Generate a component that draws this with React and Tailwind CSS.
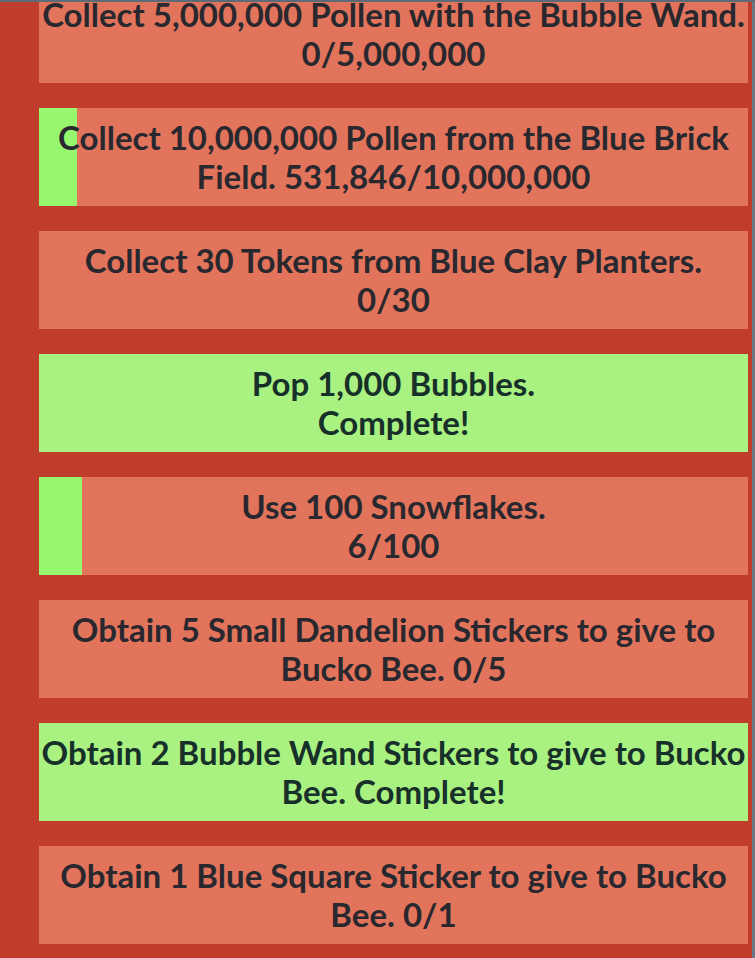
import React from "react";

const quests = [
  { lines: ["Collect 5,000,000 Pollen with the Bubble Wand.", "0/5,000,000"], done: false, progress: 0 },
  { lines: ["Collect 10,000,000 Pollen from the Blue Brick", "Field. 531,846/10,000,000"], done: false, progress: 531846 / 10000000 },
  { lines: ["Collect 30 Tokens from Blue Clay Planters.", "0/30"], done: false, progress: 0 },
  { lines: ["Pop 1,000 Bubbles.", "Complete!"], done: true, progress: 1 },
  { lines: ["Use 100 Snowflakes.", "6/100"], done: false, progress: 0.06 },
  { lines: ["Obtain 5 Small Dandelion Stickers to give to", "Bucko Bee. 0/5"], done: false, progress: 0 },
  { lines: ["Obtain 2 Bubble Wand Stickers to give to Bucko", "Bee. Complete!"], done: true, progress: 1 },
  { lines: ["Obtain 1 Blue Square Sticker to give to Bucko", "Bee. 0/1"], done: false, progress: 0 },
];

function Quest({ q }) {
  return (
    <div
      className={
        "relative flex h-[98px] shrink-0 items-center justify-center " +
        (q.done ? "bg-[#a9f282]" : "bg-[#e3745c]")
      }
    >
      {!q.done && q.progress > 0 && (
        <div
          className="absolute left-0 top-0 h-full bg-[#97f86f]"
          style={{ width: `${q.progress * 100}%` }}
        />
      )}
      <div
        className={
          "relative text-center text-[33px] leading-[39px] font-bold whitespace-nowrap " +
          (q.done ? "text-[#17302a]" : "text-[#29282f]")
        }
        style={{ fontFamily: "Lato, 'Liberation Sans', sans-serif" }}
      >
        {q.lines.map((l, i) => (
          <div key={i}>{l}</div>
        ))}
      </div>
    </div>
  );
}

export default function App() {
  return (
    <div className="relative h-[958px] w-[755px] overflow-hidden bg-[#c13d2b]">
      <div className="flex h-full">
        <div className="flex h-full w-[752px] flex-col gap-[25px] pl-[39px] pr-[4px]">
          <div className="-mt-[40px]" />
          {quests.map((q, i) => (
            <Quest key={i} q={q} />
          ))}
        </div>
        <div className="h-full w-[3px] bg-[#6b7684]" />
      </div>
      <div className="absolute left-0 top-0 h-[2px] w-full bg-[#5d6a78]" />
    </div>
  );
}
